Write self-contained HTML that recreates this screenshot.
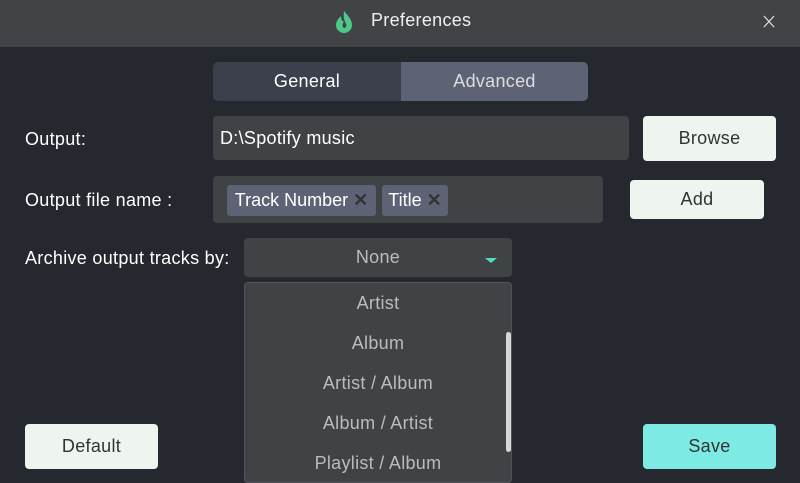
<!DOCTYPE html>
<html><head><style>
*{margin:0;padding:0;box-sizing:border-box}
body{width:800px;height:483px;background:#262830;font-family:"Liberation Sans",sans-serif;position:relative;overflow:hidden;color:#fff;font-size:18px;letter-spacing:0.3px}
.a{position:absolute}
.c{display:flex;align-items:center;justify-content:center}
.btn{background:#eef5ee;color:#333;border-radius:4px}
</style></head><body>
<div class="a" style="left:0;top:0;width:800px;height:47px;background:#414447"></div>
<svg class="a" style="left:333px;top:9px" width="22" height="26" viewBox="0 0 22 26"><path d="M11 2c3 4 8 8 8 14a8 8 0 0 1-16 0c0-4 3-7 5-9 0 3 1 5 3 6-2 2-2 5 0 6 2 0 3-2 2-4-1-3-3-5-2-13z" fill="#4cc98a"/></svg>
<div class="a" style="left:371px;top:10px;font-size:18px;color:#f0f0f0">Preferences</div>
<svg class="a" style="left:763px;top:15px" width="12" height="13" viewBox="0 0 12 13"><path d="M1 1L11 12M11 1L1 12" stroke="#ddd" stroke-width="1.3"/></svg>
<div class="a c" style="left:213px;top:62px;width:188px;height:39px;background:#3c3f4c;border-radius:5px 0 0 5px">General</div>
<div class="a c" style="left:401px;top:62px;width:187px;height:39px;background:#5e6275;border-radius:0 5px 5px 0;color:#ddd">Advanced</div>
<div class="a" style="left:25px;top:129px">Output:</div>
<div class="a" style="left:213px;top:116px;width:416px;height:44px;background:#404346;border-radius:4px;padding:12px 0 0 7px">D:\Spotify music</div>
<div class="a c btn" style="left:643px;top:116px;width:133px;height:45px">Browse</div>
<div class="a" style="left:25px;top:190px">Output file name :</div>
<div class="a" style="left:213px;top:176px;width:390px;height:47px;background:#404346;border-radius:4px"></div>
<div class="a c" style="left:227px;top:185px;width:149px;height:31px;background:#5e6275;border-radius:3px;letter-spacing:0">Track Number&nbsp;<span style="color:#333;font-weight:bold">✕</span></div>
<div class="a c" style="left:382px;top:185px;width:66px;height:31px;background:#5e6275;border-radius:3px;letter-spacing:0">Title&nbsp;<span style="color:#333;font-weight:bold">✕</span></div>
<div class="a c btn" style="left:630px;top:180px;width:134px;height:39px">Add</div>
<div class="a" style="left:25px;top:248px">Archive output tracks by:</div>
<div class="a c" style="left:244px;top:238px;width:268px;height:39px;background:#404346;border-radius:4px;color:#bbb">None</div>
<div class="a" style="left:485px;top:258px;width:0;height:0;border-left:6px solid transparent;border-right:6px solid transparent;border-top:5px solid #4fe0c0"></div>
<div class="a" style="left:244px;top:282px;width:268px;height:201px;background:#404346;border:1px solid #50535a;border-radius:4px;color:#bbb">
<div class="c" style="height:40px">Artist</div><div class="c" style="height:40px">Album</div><div class="c" style="height:40px">Artist / Album</div><div class="c" style="height:40px">Album / Artist</div><div class="c" style="height:40px">Playlist / Album</div></div>
<div class="a" style="left:506px;top:332px;width:5px;height:120px;background:#d5d6d8;border-radius:3px"></div>
<div class="a c btn" style="left:25px;top:424px;width:133px;height:45px">Default</div>
<div class="a c" style="left:643px;top:424px;width:133px;height:45px;background:#7eeae4;color:#333;border-radius:4px">Save</div>
</body></html>
